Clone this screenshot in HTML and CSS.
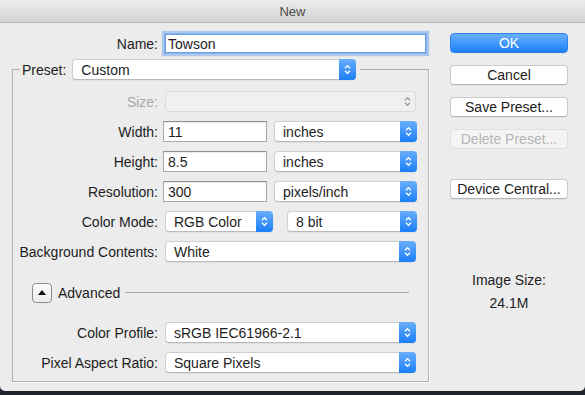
FILE: index.html
```html
<!DOCTYPE html>
<html lang="en">
<head>
    <meta charset="UTF-8">
    <title>New</title>
    <link rel="stylesheet" href="styles.css">
</head>
<body>
<div class="window">
    <div class="titlebar">New</div>

    <div class="content">
        <div class="form">
            <div class="name-row">
                <label class="label">Name:</label>
                <input type="text" class="field name" value="Towson">
            </div>

            <fieldset class="preset">
                <legend>
                    <span class="legend-label">Preset:</span>
                    <div class="popup custom">Custom<span class="stepper"><svg width="7" height="11" viewBox="0 0 7 11"><path d="M1 4.2 L3.5 1.7 L6 4.2 M1 6.8 L3.5 9.3 L6 6.8"/></svg></span></div>
                </legend>

                <div class="row">
                    <label class="label disabled">Size:</label>
                    <div class="popup wide off"><span class="stepper"><svg width="7" height="11" viewBox="0 0 7 11"><path d="M1 4.2 L3.5 1.7 L6 4.2 M1 6.8 L3.5 9.3 L6 6.8"/></svg></span></div>
                </div>
                <div class="row">
                    <label class="label">Width:</label>
                    <input type="text" class="field num" value="11">
                    <div class="popup unit">inches<span class="stepper"><svg width="7" height="11" viewBox="0 0 7 11"><path d="M1 4.2 L3.5 1.7 L6 4.2 M1 6.8 L3.5 9.3 L6 6.8"/></svg></span></div>
                </div>
                <div class="row">
                    <label class="label">Height:</label>
                    <input type="text" class="field num" value="8.5">
                    <div class="popup unit">inches<span class="stepper"><svg width="7" height="11" viewBox="0 0 7 11"><path d="M1 4.2 L3.5 1.7 L6 4.2 M1 6.8 L3.5 9.3 L6 6.8"/></svg></span></div>
                </div>
                <div class="row">
                    <label class="label">Resolution:</label>
                    <input type="text" class="field num" value="300">
                    <div class="popup unit">pixels/inch<span class="stepper"><svg width="7" height="11" viewBox="0 0 7 11"><path d="M1 4.2 L3.5 1.7 L6 4.2 M1 6.8 L3.5 9.3 L6 6.8"/></svg></span></div>
                </div>
                <div class="row">
                    <label class="label">Color Mode:</label>
                    <div class="popup mode">RGB Color<span class="stepper"><svg width="7" height="11" viewBox="0 0 7 11"><path d="M1 4.2 L3.5 1.7 L6 4.2 M1 6.8 L3.5 9.3 L6 6.8"/></svg></span></div>
                    <div class="popup bits">8 bit<span class="stepper"><svg width="7" height="11" viewBox="0 0 7 11"><path d="M1 4.2 L3.5 1.7 L6 4.2 M1 6.8 L3.5 9.3 L6 6.8"/></svg></span></div>
                </div>
                <div class="row">
                    <label class="label">Background Contents:</label>
                    <div class="popup wide">White<span class="stepper"><svg width="7" height="11" viewBox="0 0 7 11"><path d="M1 4.2 L3.5 1.7 L6 4.2 M1 6.8 L3.5 9.3 L6 6.8"/></svg></span></div>
                </div>

                <div class="advanced">
                    <button class="disclosure"><span class="triangle"></span></button>
                    <span class="advanced-text">Advanced</span>
                    <span class="rule"></span>
                </div>

                <div class="row">
                    <label class="label">Color Profile:</label>
                    <div class="popup wide">sRGB IEC61966-2.1<span class="stepper"><svg width="7" height="11" viewBox="0 0 7 11"><path d="M1 4.2 L3.5 1.7 L6 4.2 M1 6.8 L3.5 9.3 L6 6.8"/></svg></span></div>
                </div>
                <div class="row">
                    <label class="label">Pixel Aspect Ratio:</label>
                    <div class="popup wide">Square Pixels<span class="stepper"><svg width="7" height="11" viewBox="0 0 7 11"><path d="M1 4.2 L3.5 1.7 L6 4.2 M1 6.8 L3.5 9.3 L6 6.8"/></svg></span></div>
                </div>
            </fieldset>
        </div>

        <div class="side">
            <button class="push ok">OK</button>
            <button class="push">Cancel</button>
            <button class="push">Save Preset...</button>
            <button class="push" disabled>Delete Preset...</button>
            <button class="push device">Device Central...</button>

            <div class="image-size">
                <div>Image Size:</div>
                <div class="size-value">24.1M</div>
            </div>
        </div>
    </div>
</div>
</body>
</html>
```

FILE: styles.css
```css
body {
  margin: 0;
  background: #1e232d;
  font-family: "Liberation Sans", Arial, sans-serif;
  font-size: 14px;
  color: #1d1d1d;
}

.window {
  width: 585px;
  height: 391px;
  background: #ececec;
  border-radius: 0 0 5px 5px;
  overflow: hidden;
}

.titlebar {
  height: 22px;
  line-height: 23px;
  text-align: center;
  font-size: 13px;
  color: #4b4b4b;
  background: linear-gradient(#ececec, #d4d4d4);
  border-bottom: 1px solid #b4b4b4;
}

.content {
  display: flex;
  padding-left: 12px;
}

.form {
  width: 417px;
}

/* name line */
.name-row {
  display: flex;
  align-items: center;
  margin-top: 11px;
}

.label {
  width: 146px;
  text-align: right;
  white-space: nowrap;
}

.label.disabled {
  color: #a9a9a9;
}

.field {
  box-sizing: border-box;
  height: 21px;
  margin: 0 0 0 5px;
  padding: 0 4px;
  border: 1px solid #a8a8a8;
  border-top-color: #8f8f8f;
  box-shadow: inset 0 1px 1px rgba(0, 0, 0, 0.08);
  background: #fff;
  font-family: inherit;
  font-size: 14px;
  color: #1d1d1d;
  outline: none;
}

.field.name {
  width: 261px;
  height: 19px;
  margin-left: 7px;
  padding-left: 2px;
  border-color: #6c9fe0;
  box-shadow: 0 0 0 1px #86b4ef, 0 0 1px 3px rgba(120, 170, 240, 0.55);
}

.field.num {
  width: 104px;
}

/* group box */
.preset {
  margin: 6px 0 0;
  padding: 11px 0 8px;
  border: 1px solid #b0b0b0;
  box-shadow: 1px 1px 0 #fafafa;
  min-inline-size: 0;
}

.preset legend {
  display: flex;
  align-items: center;
  margin-left: 7px;
  padding: 0 4px 0 2px;
}

.legend-label {
  margin-right: 6px;
}

.row {
  display: flex;
  align-items: center;
  height: 21px;
  margin-bottom: 9px;
}

.row:last-child {
  margin-bottom: 0;
}

.row .label {
  width: 145px;
}

/* popup buttons */
.popup {
  position: relative;
  box-sizing: border-box;
  height: 21px;
  line-height: 20px;
  margin-left: 7px;
  padding-left: 8px;
  background: #fff;
  border: 1px solid #cfcfcf;
  border-bottom-color: #b9b9b9;
  border-radius: 4px;
  box-shadow: 0 1px 1px rgba(0, 0, 0, 0.06);
  white-space: nowrap;
}

.stepper {
  position: absolute;
  top: -1px;
  right: -1px;
  bottom: -1px;
  width: 17px;
  display: flex;
  align-items: center;
  justify-content: center;
  border-radius: 0 4px 4px 0;
  background: linear-gradient(#69aefb, #1b7ff7);
}

.stepper svg path {
  fill: none;
  stroke: #fff;
  stroke-width: 1.3;
}

.popup.custom {
  width: 284px;
  margin-left: 0;
}

.popup.wide {
  width: 251px;
}

.popup.unit {
  width: 143px;
}

.popup.mode {
  width: 108px;
}

.popup.bits {
  width: 130px;
  margin-left: 14px;
}

.popup.off {
  background: #f0f0f0;
  border-color: #dadada;
  box-shadow: none;
}

.popup.off .stepper {
  background: none;
}

.popup.off .stepper svg path {
  stroke: #9b9b9b;
}

/* advanced */
.advanced {
  display: flex;
  align-items: center;
  margin: 21px 19px 19px 19px;
  height: 20px;
}

.disclosure {
  box-sizing: border-box;
  width: 20px;
  height: 20px;
  padding: 0;
  display: flex;
  align-items: center;
  justify-content: center;
  border: 1px solid #8c8c8c;
  border-radius: 4px;
  background: linear-gradient(#fdfdfd, #ececec);
}

.triangle {
  width: 0;
  height: 0;
  border-left: 4px solid transparent;
  border-right: 4px solid transparent;
  border-bottom: 5px solid #111;
  margin-top: -1px;
}

.advanced-text {
  margin-left: 6px;
}

.rule {
  flex: 1;
  height: 1px;
  margin: 0 0 1px 5px;
  background: #a8a8a8;
}

/* right column */
.side {
  display: flex;
  flex-direction: column;
  width: 118px;
  margin-left: 21px;
  padding-top: 10px;
}

.push {
  box-sizing: border-box;
  height: 20px;
  margin-bottom: 12px;
  padding: 0;
  font-family: inherit;
  font-size: 14px;
  color: #1d1d1d;
  background: #fff;
  border: 1px solid #cbcbcb;
  border-bottom-color: #b5b5b5;
  border-radius: 4px;
  box-shadow: 0 1px 1px rgba(0, 0, 0, 0.05);
}

.push.ok {
  color: #fff;
  border-color: #2b82ee;
  background: linear-gradient(#69b0fb, #1c7ff6);
}

.push:disabled {
  color: #b5b5b5;
  background: #f4f4f4;
  border-color: #dedede;
  box-shadow: none;
}

.push.device {
  margin-top: 18px;
}

.image-size {
  margin-top: 61px;
  text-align: center;
  line-height: 16px;
}

.size-value {
  margin-top: 7px;
}
```
